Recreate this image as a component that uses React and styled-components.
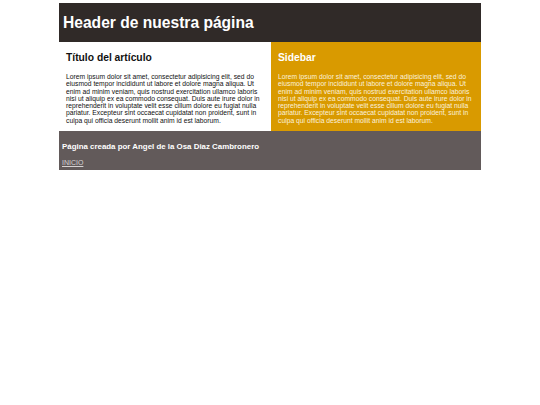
import React from "react";
import styled, { createGlobalStyle } from "styled-components";

const GlobalStyle = createGlobalStyle`
  html, body {
    margin: 0;
    padding: 0;
    background: #ffffff;
    font-family: "Liberation Sans", Arial, sans-serif;
  }
`;

const Page = styled.div`
  width: 422px;
  margin: 3px auto 0;
`;

const Header = styled.header`
  background: #302a28;
  height: 39px;
  display: flex;
  align-items: center;
  padding: 0 4px;
  box-sizing: border-box;

  h1 {
    margin: 0;
    color: #ffffff;
    font-size: 15.6px;
    font-weight: bold;
  }
`;

const Body = styled.div`
  display: flex;
`;

const Column = styled.section`
  flex: 0 0 ${(p) => p.$width}px;
  box-sizing: border-box;
  padding: 7px 7px 7px 7px;
  background: ${(p) => p.$bg};
  color: ${(p) => p.$color};

  h2 {
    margin: 2.5px 0 9.5px;
    font-size: 10.3px;
    line-height: 12px;
    font-weight: bold;
    color: ${(p) => p.$titleColor};
  }

  p {
    margin: 0;
    font-size: 6.75px;
    line-height: 7.3px;
  }
`;

const Footer = styled.footer`
  background: #625a5a;
  padding: 11px 3px 0;
  height: 39px;
  box-sizing: border-box;
  font-size: 7px;

  p {
    margin: 0 0 6px;
    color: #ffffff;
    font-size: 7.9px;
    line-height: 10px;
    font-weight: bold;
  }

  a {
    display: block;
    color: #d6d2d2;
    font-size: 7px;
    line-height: 9px;
    text-decoration: underline;
  }
`;

const lorem =
  "Lorem ipsum dolor sit amet, consectetur adipisicing elit, sed do eiusmod tempor incididunt ut labore et dolore magna aliqua. Ut enim ad minim veniam, quis nostrud exercitation ullamco laboris nisi ut aliquip ex ea commodo consequat. Duis aute irure dolor in reprehenderit in voluptate velit esse cillum dolore eu fugiat nulla pariatur. Excepteur sint occaecat cupidatat non proident, sunt in culpa qui officia deserunt mollit anim id est laborum.";

export default function App() {
  return (
    <>
      <GlobalStyle />
      <Page>
        <Header>
          <h1>Header de nuestra página</h1>
        </Header>
        <Body>
          <Column $width={212} $bg="#ffffff" $color="#111111" $titleColor="#111111">
            <h2>Título del artículo</h2>
            <p>{lorem}</p>
          </Column>
          <Column $width={210} $bg="#d99a00" $color="#fbf1dc" $titleColor="#ffffff">
            <h2>Sidebar</h2>
            <p>{lorem}</p>
          </Column>
        </Body>
        <Footer>
          <p>Página creada por Angel de la Osa Diaz Cambronero</p>
          <a href="#">INICIO</a>
        </Footer>
      </Page>
    </>
  );
}
